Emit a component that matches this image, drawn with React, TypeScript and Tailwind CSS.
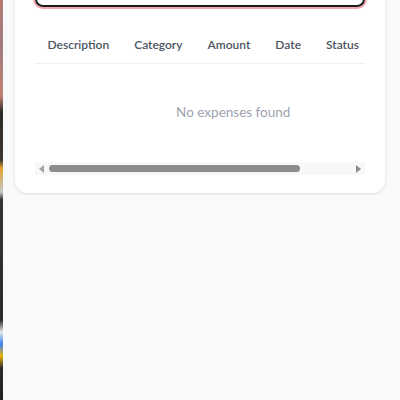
import React from 'react';

const columns = ['Description', 'Category', 'Amount', 'Date', 'Status'];

// visible part of the table vs its full width, for the fake scrollbar thumb
const thumbPct = 83;

export default function App() {
  return (
    <div className="relative min-h-[400px] w-[400px] overflow-hidden bg-[#f8f9fb] font-['Lato',sans-serif]">
      {/* sliver of the window behind */}
      <div className="absolute left-0 top-0 h-full w-[3px] bg-[linear-gradient(to_bottom,#b47a72_0%,#a07c80_12%,#c08070_24%,#2c2a28_28%,#3a3630_40%,#e0a030_42%,#c8c8c8_48%,#333_50%,#2a2a2a_80%,#e8e8e8_83%,#3b82f6_86%,#eab308_89%,#2a2a2a_92%,#202020_100%)]" />

      <div className="px-[15px]">
        <div className="-mt-[53px] rounded-xl bg-white px-5 pt-5 pb-[18px] shadow-sm">
          {/* search input (focused) */}
          <div className="h-[40px] rounded-lg border-2 border-[#1c1c1c] shadow-[0_0_0_2px_#f7a3b0]" />

          <div className="mt-5 overflow-hidden">
            <table className="w-max border-collapse">
              <thead>
                <tr className="border-b border-[#eef0f2]">
                  {columns.map((c) => (
                    <th
                      key={c}
                      className="whitespace-nowrap px-[12.5px] py-2 text-left text-[12px] leading-5 font-semibold text-[#4b5563]"
                    >
                      {c}
                    </th>
                  ))}
                  {/* actions column, scrolled out of view */}
                  <th className="w-[60px] min-w-[60px] py-2" />
                </tr>
              </thead>
              <tbody>
                <tr>
                  <td
                    colSpan={columns.length + 1}
                    className="pt-[38px] pb-[40px] text-center text-[13.5px] leading-5 text-[#9ca3af]"
                  >
                    No expenses found
                  </td>
                </tr>
              </tbody>
            </table>
          </div>

          {/* horizontal scrollbar */}
          <div className="flex h-[13px] items-center bg-[#f8f8f8] px-[4px]">
            <div className="h-0 w-0 border-y-[4px] border-r-[5px] border-y-transparent border-r-[#a3a3a3]" />
            <div className="mx-[5px] flex-1">
              <div className="h-[7px] rounded-full bg-[#8c8c8c]" style={{ width: `${thumbPct}%` }} />
            </div>
            <div className="h-0 w-0 border-y-[4px] border-l-[5px] border-y-transparent border-l-[#8c8c8c]" />
          </div>
        </div>
      </div>
    </div>
  );
}
